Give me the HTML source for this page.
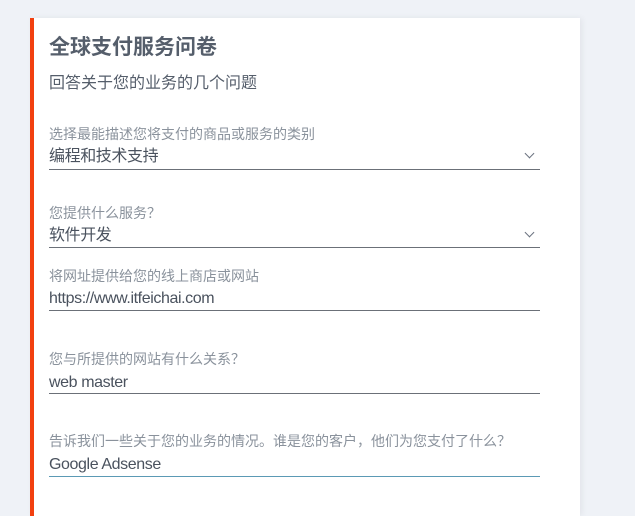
<!DOCTYPE html>
<html><head><meta charset="utf-8"><style>
html,body{margin:0;padding:0;width:635px;height:516px;overflow:hidden;background:#eff2f7;font-family:"Liberation Sans","Noto Sans CJK SC",sans-serif;}
.card{position:absolute;left:30px;top:18px;width:546px;height:498px;background:#fff;border-left:4px solid #f2400f;box-shadow:2px 0 6px rgba(0,0,0,0.06);}
.t{position:absolute;left:49px;white-space:nowrap;line-height:1;}
.h{font-size:21px;font-weight:bold;color:#555e6b;}
.s{font-size:16px;color:#555e6b;}
.l{font-size:14px;color:#8a929c;font-family:"Noto Sans CJK SC",sans-serif;}
.v{font-size:16px;color:#4a525e;letter-spacing:-0.4px;}
.u{position:absolute;left:49px;width:491px;height:1px;background:#6b7078;}
.c{position:absolute;left:526px;width:6px;height:6px;border-right:1.3px solid #6b7380;border-bottom:1.3px solid #6b7380;transform:rotate(45deg);}
</style></head><body>
<div class="card"></div>
<div class="t h" style="top:37px">全球支付服务问卷</div>
<div class="t s" style="top:76px">回答关于您的业务的几个问题</div>
<div class="t l" style="top:127px">选择最能描述您将支付的商品或服务的类别</div>
<div class="t v" style="top:149px">编程和技术支持</div>
<div class="c" style="top:150px"></div>
<div class="u" style="top:169px"></div>
<div class="t l" style="top:206px">您提供什么服务？</div>
<div class="t v" style="top:228px">软件开发</div>
<div class="c" style="top:229px"></div>
<div class="u" style="top:247px"></div>
<div class="t l" style="top:269px">将网址提供给您的线上商店或网站</div>
<div class="t v" style="top:291px">https://www.itfeichai.com</div>
<div class="u" style="top:310px"></div>
<div class="t l" style="top:352px">您与所提供的网站有什么关系？</div>
<div class="t v" style="top:375px">web master</div>
<div class="u" style="top:393px"></div>
<div class="t l" style="top:434px">告诉我们一些关于您的业务的情况。谁是您的客户，他们为您支付了什么？</div>
<div class="t v" style="top:457px">Google Adsense</div>
<div class="u" style="top:476px;background:#5b9ab5"></div>
</body></html>
